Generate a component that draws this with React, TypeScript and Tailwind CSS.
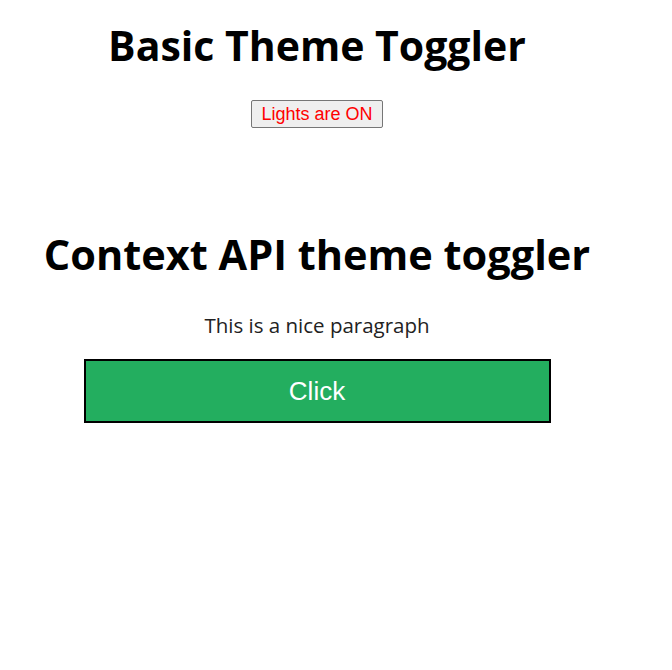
import React from "react";

export default function App() {
  return (
    <div className="w-[634px] bg-white text-black">
      <div className="flex flex-col items-center pt-[21px]">
        <h1 className="text-[41px] font-bold leading-[48px] font-['Open_Sans',sans-serif]">Basic Theme Toggler</h1>
        <button className="mt-[31px] h-[28px] w-[132px] border border-[#767676] bg-[#efefef] rounded-[2px] text-[18px] text-[#ff0000] font-['Liberation_Sans',Arial,sans-serif] leading-none">
          Lights are ON
        </button>
      </div>
      <div className="flex flex-col items-center mt-[99px]">
        <h1 className="text-[41.5px] font-bold leading-[54px] font-['Open_Sans',sans-serif]">Context API theme toggler</h1>
        <p className="mt-[31px] text-[20.5px] leading-[26px] text-[#222] font-['Open_Sans',sans-serif]">This is a nice paragraph</p>
        <button className="mt-[21px] h-[64px] w-[467px] border-2 border-black bg-[#23ae5f] text-white text-[26px] font-['Liberation_Sans',Arial,sans-serif]">
          Click
        </button>
      </div>
    </div>
  );
}
